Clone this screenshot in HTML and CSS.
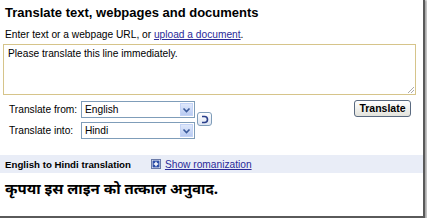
FILE: index.html
```html
<!DOCTYPE html>
<html>
<head>
<meta charset="utf-8">
<link rel="stylesheet" href="styles.css">
</head>
<body>
<div class="frame">
  <h1 class="title">Translate text, webpages and documents</h1>
  <div class="hint">Enter text or a webpage URL, or <a href="#" class="link">upload a document</a>.</div>
  <div class="source">Please translate this line immediately.<span class="grip"></span></div>
  <div class="controls">
    <div class="langs">
      <div class="lang-row">
        <span class="lang-label">Translate from:</span>
        <div class="select"><span class="sel-text">English</span><span class="sel-arrow"><svg width="9" height="6" viewBox="0 0 9 6"><path d="M1.5 1.5 L4.5 4.5 L7.5 1.5" fill="none" stroke="#3a5a9a" stroke-width="1.6"/></svg></span></div>
      </div>
      <div class="lang-row">
        <span class="lang-label">Translate into:</span>
        <div class="select"><span class="sel-text">Hindi</span><span class="sel-arrow"><svg width="9" height="6" viewBox="0 0 9 6"><path d="M1.5 1.5 L4.5 4.5 L7.5 1.5" fill="none" stroke="#3a5a9a" stroke-width="1.6"/></svg></span></div>
      </div>
    </div>
    <div class="swap"><svg width="11" height="11" viewBox="0 0 11 11"><path d="M3 2.5 H5.5 Q8.5 2.5 8.5 5.5 Q8.5 8.5 5.5 8.5 H3" fill="none" stroke="#2a3f8a" stroke-width="1.6"/></svg></div>
    <div class="spacer"></div>
    <button class="go">Translate</button>
  </div>
  <div class="band">
    <span class="band-title">English to Hindi translation</span>
    <span class="plus"><svg width="10" height="10" viewBox="0 0 10 10"><rect x="0.5" y="0.5" width="9" height="9" fill="#ffffff" stroke="#6a7aa8"/><rect x="1.5" y="1.5" width="7" height="7" fill="#2d4fa8"/><path d="M5 2.8 V7.2 M2.8 5 H7.2" stroke="#ffffff" stroke-width="1.5"/></svg></span>
    <a href="#" class="link roman">Show romanization</a>
  </div>
  <div class="result">कृपया इस लाइन को तत्काल अनुवाद.</div>
</div>
</body>
</html>
```
FILE: styles.css
```css
html, body {
  margin: 0;
  padding: 0;
  background: #ffffff;
}
.frame {
  box-sizing: border-box;
  width: 425px;
  height: 218px;
  background: #ffffff;
  border-right: 2px solid #5a5a5a;
  border-bottom: 2px solid #5a5a5a;
  box-shadow: 1px 1px 2px 1px rgba(0,0,0,0.35);
  font-family: "Liberation Sans", Arial, sans-serif;
  color: #000;
  overflow: hidden;
}
.title {
  margin: 0;
  padding: 5px 0 0 5px;
  font-size: 13px;
  font-weight: bold;
  line-height: 16px;
}
.hint {
  margin-top: 7px;
  padding-left: 5px;
  font-size: 10.2px;
  line-height: 13px;
}
.link {
  color: #2a2a99;
  text-decoration: underline;
}
.source {
  position: relative;
  box-sizing: border-box;
  margin: 3px 0 0 3px;
  width: 413px;
  height: 51px;
  border: 1px solid #d6c48a;
  padding: 2px 4px;
  font-size: 10.2px;
  line-height: 13px;
}
.grip {
  position: absolute;
  right: 1px;
  bottom: 1px;
  width: 6px;
  height: 6px;
  background: linear-gradient(135deg, transparent 45%, #aaa 45%, #aaa 55%, transparent 55%, transparent 70%, #aaa 70%, #aaa 80%, transparent 80%);
}
.controls {
  display: flex;
  align-items: flex-start;
  margin-top: 6px;
  padding: 0 12px 0 9px;
}
.langs {
  display: flex;
  flex-direction: column;
  gap: 4px;
}
.lang-row {
  display: flex;
  align-items: center;
}
.lang-label {
  width: 72px;
  white-space: nowrap;
  font-size: 10.2px;
}
.select {
  box-sizing: border-box;
  width: 114px;
  height: 17px;
  border: 1px solid #7f9db9;
  display: flex;
  align-items: center;
  font-size: 10.2px;
}
.sel-text {
  flex: 1;
  padding-left: 3px;
}
.sel-arrow {
  width: 13px;
  height: 13px;
  margin-right: 1px;
  background: linear-gradient(#dfe8fb, #b9cbf2);
  border: 1px solid #c3d3f6;
  box-sizing: border-box;
  display: flex;
  align-items: center;
  justify-content: center;
}
.swap {
  box-sizing: border-box;
  margin: 11px 0 0 2px;
  width: 15px;
  height: 14px;
  border: 1px solid #7f9db9;
  border-radius: 3px;
  background: linear-gradient(#ffffff, #dde5f3);
  display: flex;
  align-items: center;
  justify-content: center;
}
.spacer {
  flex: 1;
}
.go {
  box-sizing: border-box;
  margin-top: -1px;
  height: 17px;
  width: 57px;
  padding: 0;
  border: 1px solid #5a6a80;
  border-radius: 3px;
  background: linear-gradient(#ffffff, #e3e3dc);
  font-family: "Liberation Sans", Arial, sans-serif;
  font-size: 10.5px;
  font-weight: bold;
  color: #000;
  line-height: 15px;
}
.band {
  display: flex;
  align-items: center;
  margin-top: 16px;
  height: 18px;
  background: #e9edf7;
  padding-left: 5px;
  font-size: 10.2px;
}
.band-title {
  font-weight: bold;
  font-size: 9.7px;
}
.plus {
  display: flex;
  margin-left: 20px;
  margin-right: 4px;
}
.result {
  padding: 8px 0 0 5px;
  font-family: "Noto Sans Devanagari", "Lohit Devanagari", Mangal, "Noto Sans", sans-serif;
  font-size: 15px;
  font-weight: bold;
  line-height: 20px;
}
```
